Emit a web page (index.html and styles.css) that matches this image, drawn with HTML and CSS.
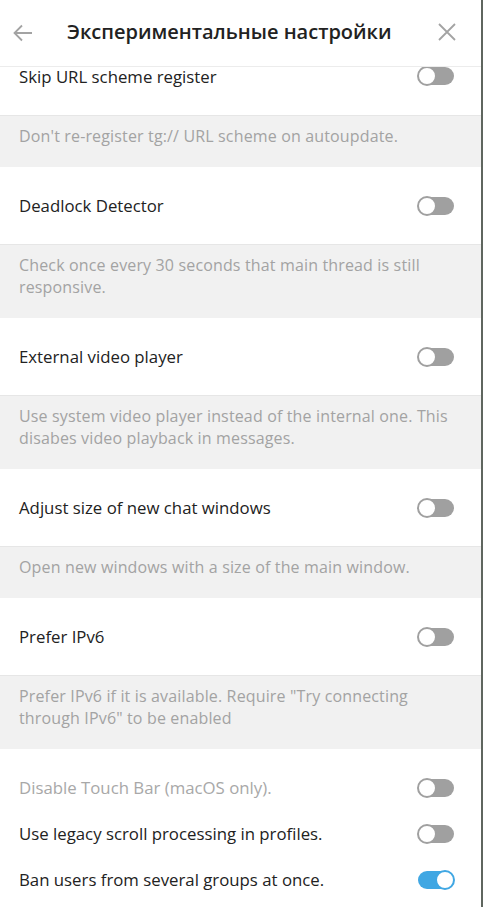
FILE: index.html
```html
<!DOCTYPE html>
<html lang="ru">
<head>
<meta charset="utf-8">
<link rel="stylesheet" href="styles.css">
</head>
<body>
<div class="window">
  <header class="header">
    <svg class="icon back" width="24" height="24" viewBox="0 0 24 24"><path d="M21 12H3.5M11 4.5L3.5 12L11 19.5" fill="none" stroke="#a3a3a3" stroke-width="1.8"/></svg>
    <h1 class="title">Экспериментальные настройки</h1>
    <svg class="icon close" width="22" height="22" viewBox="0 0 22 22"><path d="M3 3L19 19M19 3L3 19" fill="none" stroke="#a3a3a3" stroke-width="1.8"/></svg>
  </header>
  <div class="scroll">
    <div class="row partial"><span class="label">Skip URL scheme register</span><span class="toggle"></span></div>
    <div class="about">Don't re-register tg:// URL scheme on autoupdate.</div>
    <div class="row"><span class="label">Deadlock Detector</span><span class="toggle"></span></div>
    <div class="about">Check once every 30 seconds that main thread is still responsive.</div>
    <div class="row"><span class="label">External video player</span><span class="toggle"></span></div>
    <div class="about">Use system video player instead of the internal one. This disabes video playback in messages.</div>
    <div class="row"><span class="label">Adjust size of new chat windows</span><span class="toggle"></span></div>
    <div class="about">Open new windows with a size of the main window.</div>
    <div class="row"><span class="label">Prefer IPv6</span><span class="toggle"></span></div>
    <div class="about">Prefer IPv6 if it is available. Require "Try connecting through IPv6" to be enabled</div>
    <div class="group">
      <div class="item"><span class="label disabled">Disable Touch Bar (macOS only).</span><span class="toggle"></span></div>
      <div class="item"><span class="label">Use legacy scroll processing in profiles.</span><span class="toggle"></span></div>
      <div class="item"><span class="label">Ban users from several groups at once.</span><span class="toggle on"></span></div>
    </div>
  </div>
</div>
</body>
</html>
```
FILE: styles.css
```css
html, body {
  margin: 0;
  padding: 0;
  background: #ffffff;
}
body {
  font-family: "Open Sans", "Noto Sans", sans-serif;
  color: #222222;
}
.window {
  width: 481px;
  height: 907px;
  border-right: 2px solid #5f665f;
  display: flex;
  flex-direction: column;
  overflow: hidden;
  background: #ffffff;
}
.header {
  height: 67px;
  flex: none;
  display: flex;
  align-items: center;
  padding: 0 23px 0 11px;
  border-bottom: 1px solid #ececec;
  box-sizing: border-box;
  background: #fff;
}
.icon { flex: none; display: block; }
.back { margin-top: -1px; }
.title {
  flex: 1;
  margin: -2px 0 0 32px;
  font-size: 20px;
  font-weight: 600;
  color: #222;
  line-height: 1;
}
.close { margin-top: -2px; }
.scroll {
  flex: 1;
  overflow: hidden;
}
.row {
  height: 77px;
  display: flex;
  align-items: center;
  justify-content: space-between;
  padding: 0 27px 0 19px;
  box-sizing: border-box;
}
.row.partial {
  height: 48px;
  padding-top: 0;
  align-items: flex-start;
}
.row.partial .label { line-height: 20px; }
.label {
  font-size: 16.8px;
  line-height: 22px;
  color: #222;
}
.label.disabled { color: #a8a8a8; }
.about {
  background: #f1f1f1;
  border-top: 1px solid #e6e6e6;
  color: #a3a3a3;
  font-size: 16px;
  letter-spacing: 0.15px;
  line-height: 22px;
  padding: 9px 27px 20px 19px;
}
.group {
  padding-top: 16px;
}
.item {
  height: 46px;
  display: flex;
  align-items: center;
  justify-content: space-between;
  padding: 0 27px 0 19px;
}
.toggle {
  position: relative;
  width: 36px;
  height: 18px;
  border-radius: 9px;
  background: #a0a0a0;
  flex: none;
}
.toggle::after {
  content: "";
  position: absolute;
  left: -1px;
  top: -1px;
  width: 16px;
  height: 16px;
  border-radius: 50%;
  background: #fff;
  border: 2px solid #a0a0a0;
}
.toggle.on { background: #40a7e3; }
.toggle.on::after {
  left: auto;
  right: -1px;
  border-color: #40a7e3;
}
```
